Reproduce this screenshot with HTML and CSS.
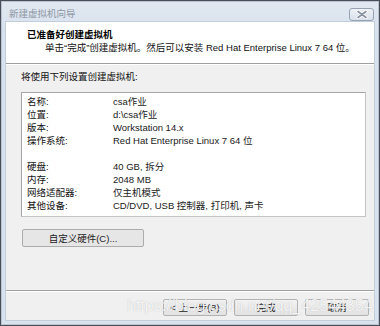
FILE: index.html
```html
<!DOCTYPE html>
<html>
<head>
<meta charset="utf-8">
<link rel="stylesheet" href="styles.css">
</head>
<body>
<div class="window">
  <div class="titlebar">
    <span class="title">新建虚拟机向导</span>
    <span class="close">
      <svg width="12" height="9" viewBox="0 0 12 9"><path d="M2 1.5 L10 7.5 M10 1.5 L2 7.5" stroke="#fff" stroke-width="3.2" stroke-linecap="round"/><path d="M2 1.5 L10 7.5 M10 1.5 L2 7.5" stroke="#8791a0" stroke-width="1.6" stroke-linecap="round"/></svg>
    </span>
  </div>
  <div class="client">
    <div class="header">
      <div class="h-title">已准备好创建虚拟机</div>
      <div class="h-sub">单击“完成”创建虚拟机。然后可以安装 Red Hat Enterprise Linux 7 64 位。</div>
    </div>
    <div class="body">
      <div class="intro">将使用下列设置创建虚拟机:</div>
      <div class="summary">
        <div class="row"><span class="k">名称:</span><span class="v">csa作业</span></div>
        <div class="row"><span class="k">位置:</span><span class="v">d:\csa作业</span></div>
        <div class="row"><span class="k">版本:</span><span class="v">Workstation 14.x</span></div>
        <div class="row"><span class="k">操作系统:</span><span class="v">Red Hat Enterprise Linux 7 64 位</span></div>
        <div class="row blank"></div>
        <div class="row"><span class="k">硬盘:</span><span class="v">40 GB, 拆分</span></div>
        <div class="row"><span class="k">内存:</span><span class="v">2048 MB</span></div>
        <div class="row"><span class="k">网络适配器:</span><span class="v">仅主机模式</span></div>
        <div class="row"><span class="k">其他设备:</span><span class="v">CD/DVD, USB 控制器, 打印机, 声卡</span></div>
      </div>
      <button class="btn custom">自定义硬件(C)...</button>
    </div>
    <div class="footer">
      <button class="btn">&lt; 上一步(B)</button>
      <button class="btn">完成</button>
      <button class="btn">取消</button>
      <div class="watermark">https://blog.csdn.net/qq_42544354</div>
    </div>
  </div>
</div>
</body>
</html>
```

FILE: styles.css
```css
* { box-sizing: border-box; }
html, body { margin: 0; padding: 0; }
body {
  width: 380px;
  height: 326px;
  overflow: hidden;
  font-family: "Liberation Sans", "Noto Sans CJK SC", sans-serif;
  font-size: 9.5px;
  color: #111;
}
.window {
  width: 380px;
  height: 326px;
  border: 1px solid #4a4f57;
  box-shadow: inset 0 0 0 1px #b8c4d3;
  background: linear-gradient(#e1e8f0, #d8e2ee 30px, #d9e3ef);
  padding: 0 5px 5px 5px;
  display: flex;
  flex-direction: column;
}
.titlebar {
  height: 21px;
  display: flex;
  justify-content: space-between;
  align-items: flex-start;
  flex-shrink: 0;
}
.title {
  margin-top: 6px;
  margin-left: 3px;
  line-height: 13px;
  color: #8e98a5;
  font-size: 9.5px;
}
.close {
  margin-top: 7px;
  width: 25px;
  height: 13px;
  border: 1px solid #97a3b3;
  border-radius: 3px;
  background: linear-gradient(#eef2f6, #d9e1ea);
  display: flex;
  align-items: center;
  justify-content: center;
}
.client {
  flex: 1;
  background: #f0f0f0;
  display: flex;
  flex-direction: column;
  position: relative;
  box-shadow: 0 0 0 1px #c3cedb;
}
.header {
  height: 42px;
  background: #fff;
  border-bottom: 1px solid #a0a0a0;
  padding: 6px 0 0 21px;
  flex-shrink: 0;
}
.h-title {
  font-weight: bold;
  line-height: 13px;
  color: #000;
}
.h-sub {
  line-height: 13px;
  padding-left: 18px;
  color: #111;
}
.body {
  flex: 1;
  padding: 6px 8px 0 15px;
  border-top: 1px solid #fff;
}
.intro {
  line-height: 13px;
  margin-top: -1px;
}
.summary {
  margin-top: 9px;
  background: #fff;
  border: 1px solid #a5a5a5;
  border-right-color: #c4c4c4;
  border-bottom-color: #c4c4c4;
  padding: 2px 5px 4px 5px;
}
.row {
  display: flex;
  height: 13px;
  line-height: 13px;
}
.k { width: 86px; flex-shrink: 0; }
.v { color: #1a1a1a; }
.btn {
  font-family: "Liberation Sans", "Noto Sans CJK SC", sans-serif;
  font-size: 9.5px;
  color: #222;
  height: 17px;
  width: 64px;
  padding: 0;
  border: 1px solid #b3b3b3;
  border-radius: 2px;
  background: linear-gradient(#f3f3f3, #e2e2e2);
  line-height: 15px;
}
.custom {
  display: block;
  margin-top: 12px;
  margin-left: 1px;
  width: 122px;
  height: 18px;
  border-color: #acacac;
  background: #e6e6e6;
}
.footer {
  flex-shrink: 0;
  border-top: 1px solid #a0a0a0;
  box-shadow: inset 0 1px 0 #fff;
  padding: 8px 5px 4px 0;
  display: flex;
  justify-content: flex-end;
  gap: 7px;
  position: relative;
}
.watermark {
  position: absolute;
  left: 121px;
  top: 5px;
  font-family: "Liberation Sans", sans-serif;
  font-size: 16px;
  line-height: 20px;
  color: rgba(255, 255, 255, 0.85);
  text-shadow: 0 0 1px rgba(110, 110, 110, 0.45);
  pointer-events: none;
  white-space: nowrap;
}
```
